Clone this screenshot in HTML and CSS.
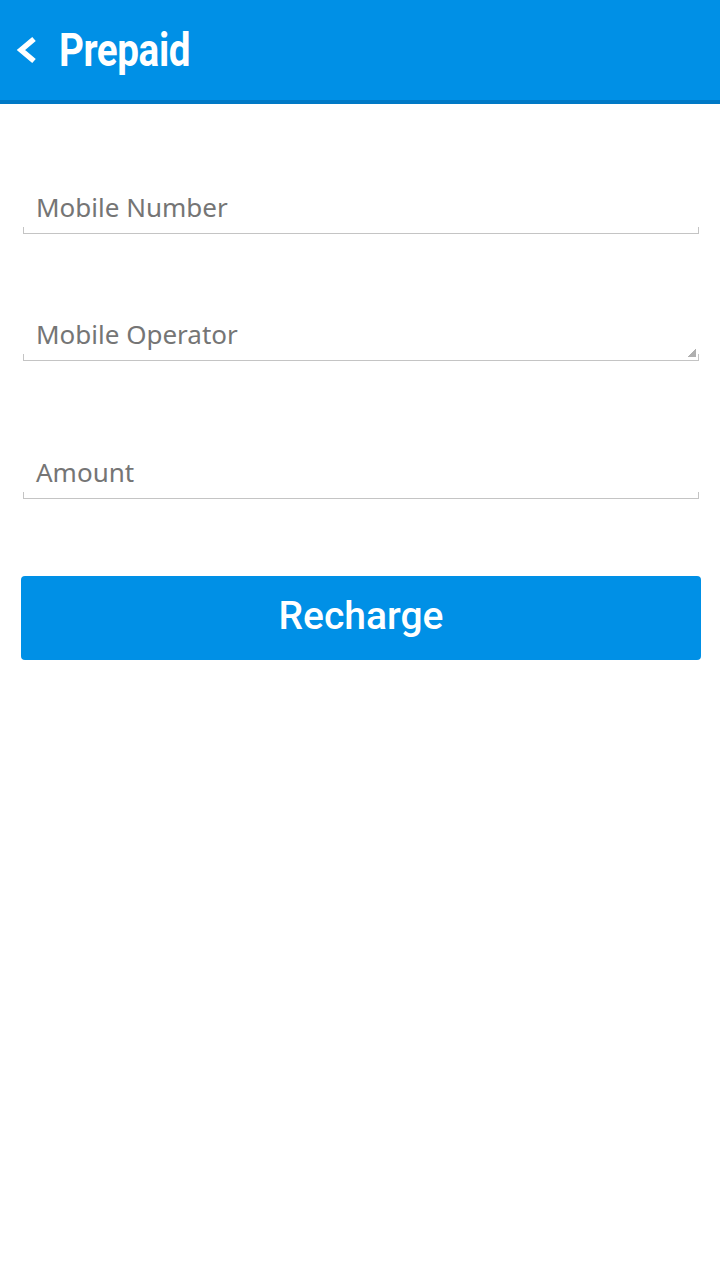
FILE: index.html
```html
<!DOCTYPE html>
<html lang="en">
    <head>
        <title>Prepaid</title>
        <meta charset="utf-8">
        <meta name="viewport" content="width=device-width, user-scalable=no, minimum-scale=1.0, maximum-scale=1.0">
        <link rel="stylesheet" href="styles.css">
    </head>
    <body>
        <div class="topbar">
            <svg class="back" width="24" height="30" viewBox="0 0 24 30">
                <path d="M19 4 L6 15 L19 26" fill="none" stroke="#fff" stroke-width="5.5"/>
            </svg>
            <h1 class="title">Prepaid</h1>
        </div>

        <div class="form">
            <div class="field first">Mobile Number</div>
            <div class="field select">Mobile Operator</div>
            <div class="field last">Amount</div>
            <div class="button">Recharge</div>
        </div>
    </body>
</html>
```

FILE: styles.css
```css
body {
    font-family: Roboto, "Noto Sans", sans-serif;
    background-color: #ffffff;
    margin: 0px;
}

.topbar {
    height: 100px;
    background-color: #0090e6;
    border-bottom: 4px solid #0079c6;
    display: flex;
    align-items: center;
    padding-left: 15px;
}

.title {
    color: white;
    font-size: 46px;
    font-weight: bold;
    margin: 0 0 0 20px;
    transform: scaleX(0.84);
    transform-origin: left center;
    letter-spacing: -0.5px;
}

.form {
    padding: 0 19px 0 21px;
    display: flex;
    flex-direction: column;
}

.field {
    position: relative;
    height: 43px;
    margin: 0 2px;
    padding: 0 0 5px 13px;
    border-bottom: 1px solid #c4c4c4;
    display: flex;
    align-items: center;
    color: #757575;
    font-family: "Noto Sans", Roboto, sans-serif;
    font-size: 26px;
}

.field::before,
.field::after {
    content: "";
    position: absolute;
    bottom: 0;
    width: 1px;
    height: 6px;
    background: #c4c4c4;
}
.field::before { left: 0; }
.field::after { right: 0; }

.first { margin-top: 81px; }
.select { margin-top: 78px; }
.last { margin-top: 89px; }

.select {
    background: linear-gradient(135deg, transparent 50%, #b0b0b0 50%) no-repeat right 3px bottom 3px / 9px 9px;
}

.button {
    margin-top: 77px;
    height: 84px;
    padding-bottom: 5px;
    box-sizing: border-box;
    background: #0090e6;
    border-radius: 4px;
    color: white;
    font-size: 39px;
    font-weight: 500;
    display: flex;
    align-items: center;
    justify-content: center;
}
```
